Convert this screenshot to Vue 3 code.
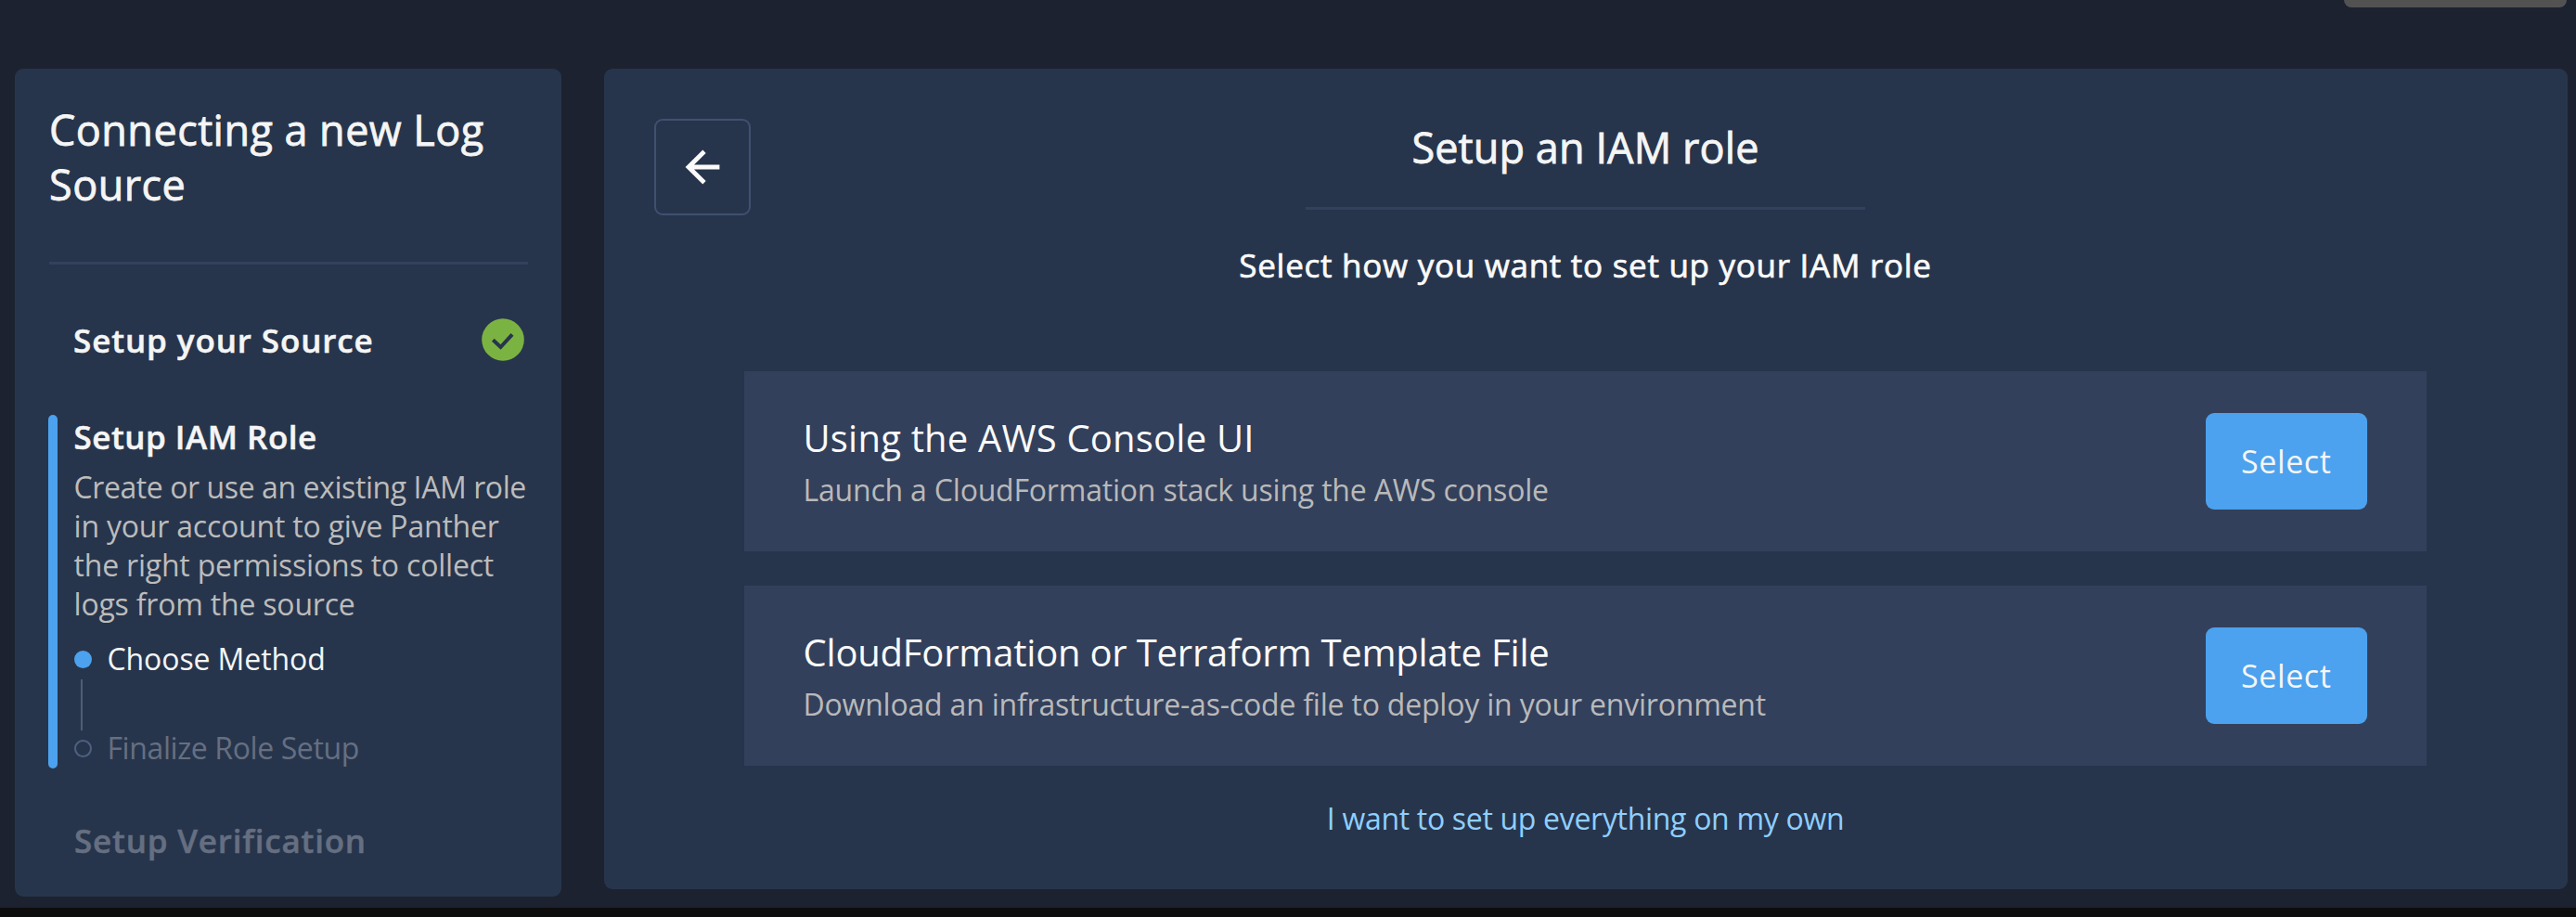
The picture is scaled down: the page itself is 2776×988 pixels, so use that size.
<script setup>
const methods = [
  {
    id: 'console',
    title: 'Using the AWS Console UI',
    description: 'Launch a CloudFormation stack using the AWS console',
  },
  {
    id: 'template',
    title: 'CloudFormation or Terraform Template File',
    description: 'Download an infrastructure-as-code file to deploy in your environment',
  },
]
</script>

<template>
  <div class="page">
    <div class="topbar"><span class="chip"></span></div>
    <div class="columns">
      <aside class="sidebar">
        <h1 class="wizard-title">Connecting a new Log<br />Source</h1>
        <div class="rule"></div>

        <div class="step step-done">
          <h2 class="step-title">Setup your Source</h2>
          <svg class="check" viewBox="0 0 46 46" width="46" height="46">
            <circle cx="23" cy="23" r="22.8" fill="#7bb342" />
            <path d="M12.3 23.3 20.5 31 33 17.3" fill="none" stroke="#27354c" stroke-width="4" />
          </svg>
        </div>

        <div class="step-active">
          <h2 class="step-title iam">Setup IAM Role</h2>
          <p class="step-text">
            Create or use an existing IAM role<br />
            in your account to give Panther<br />
            the right permissions to collect<br />
            logs from the source
          </p>
          <div class="substep current"><span class="dot"></span><span>Choose Method</span></div>
          <div class="connector"></div>
          <div class="substep pending"><span class="dot"></span><span>Finalize Role Setup</span></div>
        </div>

        <h2 class="step-title step-next">Setup Verification</h2>
      </aside>

      <main class="content">
        <header class="head">
          <button class="back" type="button" aria-label="Back">
            <svg viewBox="0 0 38 38" width="38" height="38">
              <path d="M37.4 19H4M21 2.2 4 19 21 35.8" fill="none" stroke="#fafafa" stroke-width="4.8" />
            </svg>
          </button>
          <div class="head-text">
            <h2 class="title">Setup an IAM role</h2>
            <div class="rule"></div>
            <h3 class="subtitle">Select how you want to set up your IAM role</h3>
          </div>
        </header>

        <section class="cards">
          <article v-for="m in methods" :key="m.id" class="card" :class="m.id">
            <div>
              <h4 class="card-title">{{ m.title }}</h4>
              <p class="card-text">{{ m.description }}</p>
            </div>
            <button class="select" type="button">Select</button>
          </article>
        </section>

        <a class="own">I want to set up everything on my own</a>
      </main>
    </div>
    <div class="bottom"></div>
  </div>
</template>

<style>
body {
  margin: 0;
  background: #1c222f;
}
</style>

<style scoped>
.page {
  box-sizing: border-box;
  display: flex;
  flex-direction: column;
  width: 2776px;
  height: 988px;
  overflow: hidden;
  background: #1c222f;
  color: #f5f5f5;
  font-family: "Open Sans", "Noto Sans", sans-serif;
  white-space: nowrap;
}
h1, h2, h3, h4, p {
  margin: 0;
  font-weight: 400;
}
button {
  padding: 0;
  font-family: inherit;
  color: inherit;
}
svg {
  display: block;
}
.topbar {
  display: flex;
  justify-content: flex-end;
  height: 74px;
  padding-right: 10px;
}
.chip {
  width: 240px;
  height: 8px;
  border-radius: 0 0 9px 9px;
  background: #525252;
}
.columns {
  display: flex;
  align-items: flex-start;
  flex: 1;
  gap: 45.5px;
  padding: 0 9.5px 0 16px;
}
.sidebar {
  box-sizing: border-box;
  width: 589px;
  height: 891.5px;
  padding: 37px 36px 0 37px;
  border-radius: 9px;
  background: #27354c;
}
.rule {
  height: 3px;
  background: #33415c;
}
.wizard-title {
  height: 117px;
  margin-bottom: 54px;
  font-size: 45px;
  line-height: 58.5px;
  letter-spacing: 0.45px;
  -webkit-text-stroke: 0.8px currentColor;
}
.step {
  display: flex;
  justify-content: space-between;
  height: 46px;
  margin: 58px 4px 58px 26px;
}
.step-title {
  padding-top: 1.5px;
  font-size: 35px;
  font-weight: 600;
  line-height: 43px;
  letter-spacing: 0.9px;
  -webkit-text-stroke: 0.5px currentColor;
}
.iam {
  letter-spacing: 0.5px;
}
.step-active {
  box-sizing: border-box;
  position: relative;
  height: 381px;
  padding-left: 26.5px;
}
.step-active::before {
  content: "";
  position: absolute;
  inset: 0 auto 0 -1px;
  width: 10px;
  border-radius: 5px;
  background: #4ca2ee;
}
.step-text {
  height: 168px;
  margin: 12px 0 20.6px;
  color: #bcbcbc;
  font-size: 32px;
  line-height: 42px;
  letter-spacing: -0.2px;
}
.step-text::first-line {
  letter-spacing: -0.42px;
}
.substep {
  display: flex;
  align-items: center;
  gap: 17px;
  height: 36px;
  font-size: 32px;
  line-height: 36px;
  letter-spacing: -0.1px;
}
.dot {
  box-sizing: border-box;
  width: 19px;
  height: 19px;
  margin-top: 1px;
  border-radius: 50%;
}
.current .dot {
  background: #4ca2ee;
}
.pending {
  color: #656f81;
  letter-spacing: -0.4px;
}
.pending .dot {
  border: 2.5px solid #4f6080;
}
.connector {
  width: 2px;
  height: 55px;
  margin: 3.5px 0 1.5px 7.5px;
  background: #4f5d78;
}
.step-next {
  margin: 54px 0 0 27px;
  color: #656f81;
  letter-spacing: 0.8px;
}
.content {
  box-sizing: border-box;
  display: flex;
  flex-direction: column;
  align-items: center;
  flex: 1;
  height: 884px;
  padding: 54px 54.5px 0;
  border-radius: 9px;
  background: #27354c;
}
.head {
  display: grid;
  grid-template-columns: 104px 1fr 104px;
  align-items: start;
  width: 100%;
}
.back {
  box-sizing: border-box;
  display: flex;
  align-items: center;
  justify-content: center;
  width: 104px;
  height: 104px;
  border: 2px solid #405070;
  border-radius: 9px;
  background: transparent;
}
.head-text {
  display: flex;
  flex-direction: column;
  align-items: center;
}
.head-text .rule {
  width: 603px;
  margin: 35.5px 0 36.5px;
}
.title {
  height: 58px;
  padding-top: 1.5px;
  font-size: 45px;
  line-height: 58px;
  letter-spacing: 0.1px;
  -webkit-text-stroke: 0.8px currentColor;
}
.subtitle {
  height: 46px;
  color: #fafafa;
  font-size: 35px;
  line-height: 46px;
  letter-spacing: 0.72px;
  -webkit-text-stroke: 0.7px currentColor;
}
.cards {
  display: flex;
  flex-direction: column;
  gap: 36.5px;
  width: 1813px;
  margin-top: 91px;
}
.card {
  box-sizing: border-box;
  display: flex;
  align-items: center;
  justify-content: space-between;
  height: 194.5px;
  padding: 0 64px 0 63.5px;
  background: #33405b;
}
.card-title {
  padding-top: 2px;
  color: #fafafa;
  font-size: 40px;
  line-height: 52px;
  letter-spacing: 0.2px;
}
.template .card-title {
  letter-spacing: -0.2px;
}
.card-text {
  margin-top: 9px;
  color: #b9b9ba;
  font-size: 32px;
  line-height: 42px;
  letter-spacing: -0.2px;
}
.select {
  width: 174.5px;
  height: 104px;
  padding-top: 1px;
  border: 0;
  border-radius: 9px;
  background: #4ca2ee;
  font-size: 34px;
  letter-spacing: 0.6px;
}
.own {
  margin-top: 35.5px;
  color: #8fcfff;
  font-size: 32px;
  line-height: 42px;
  letter-spacing: -0.31px;
}
.bottom {
  height: 10px;
  background: #0d0d0d;
}
</style>
